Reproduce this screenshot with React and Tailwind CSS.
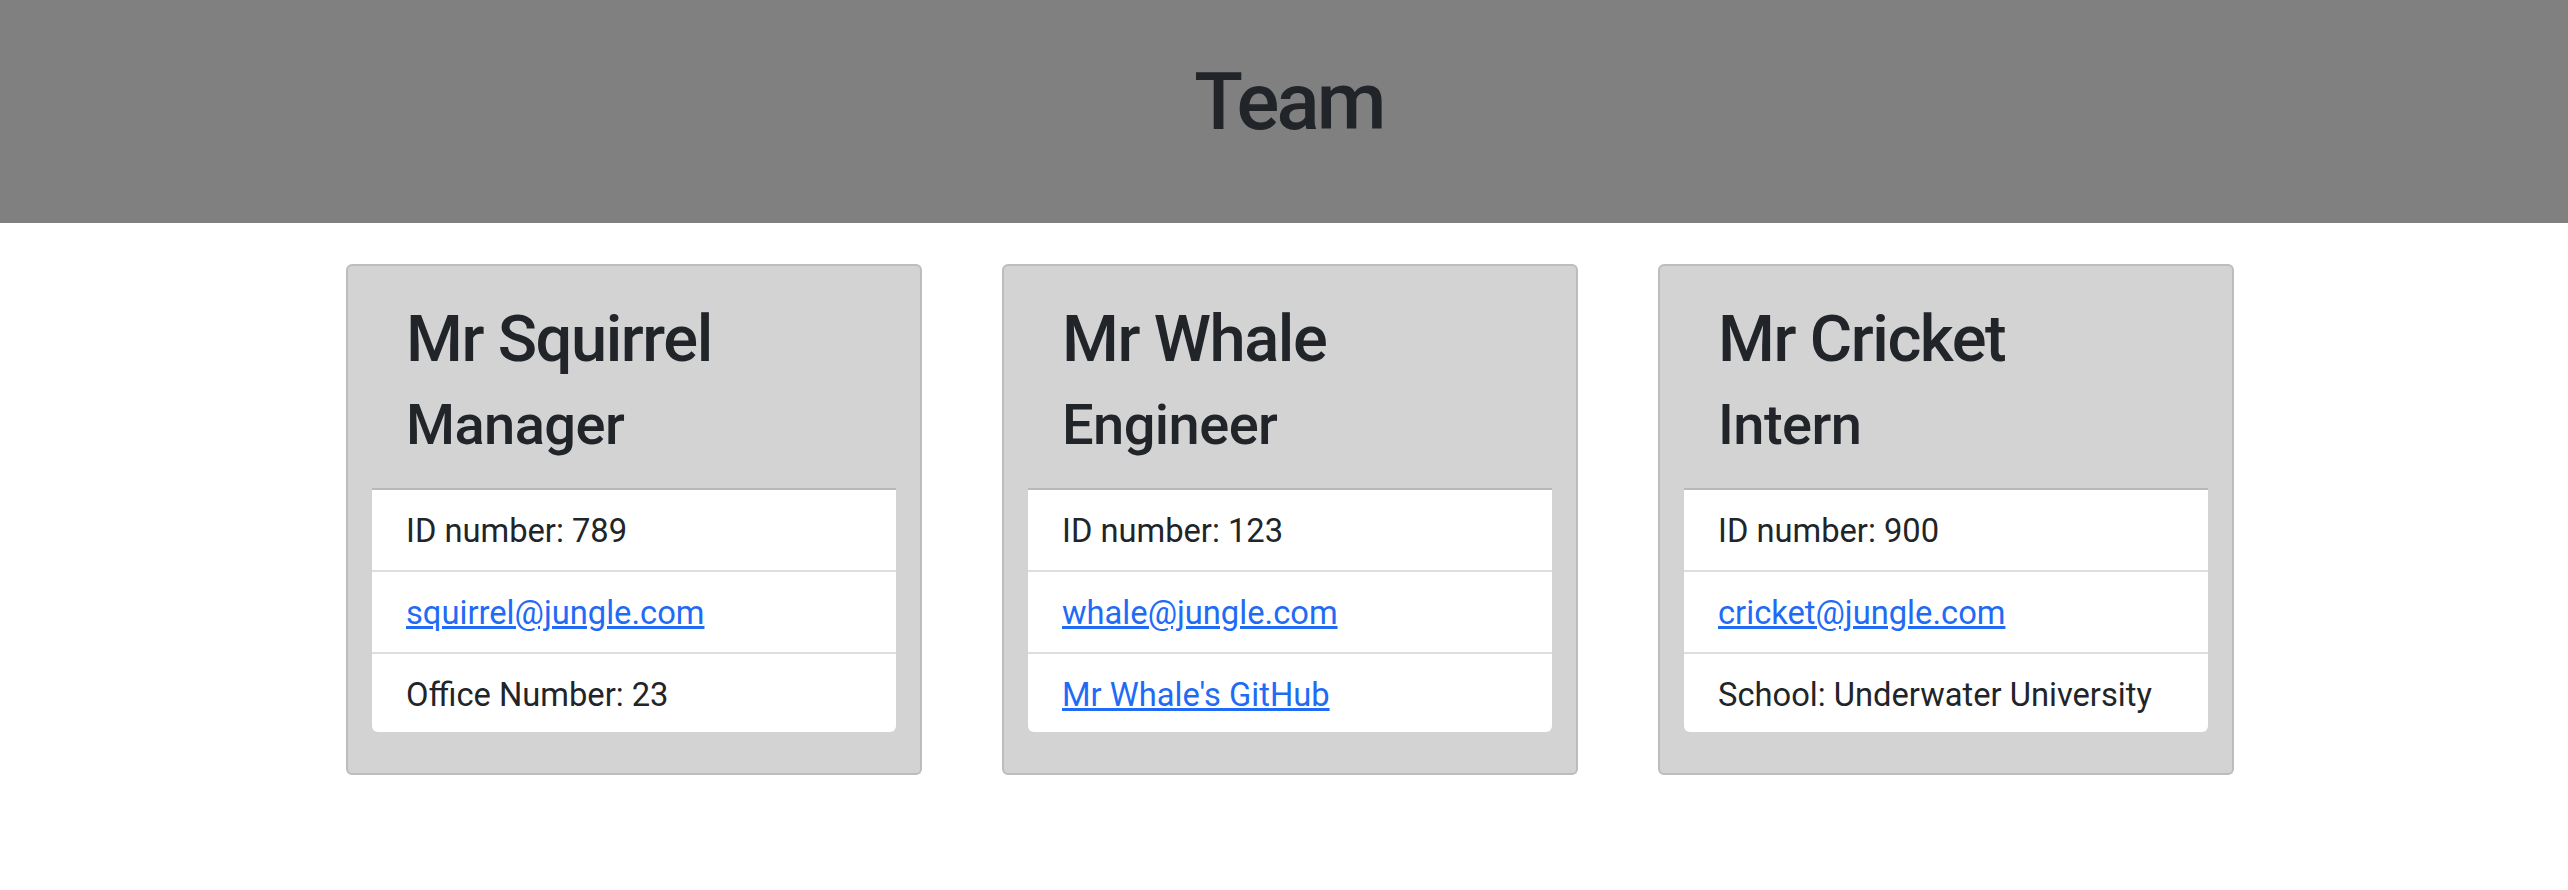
import React from "react";

const people = [
  { name: "Mr Squirrel", role: "Manager", id: "789", email: "squirrel@jungle.com", extra: { text: "Office Number: 23" } },
  { name: "Mr Whale", role: "Engineer", id: "123", email: "whale@jungle.com", extra: { text: "Mr Whale's GitHub", link: true } },
  { name: "Mr Cricket", role: "Intern", id: "900", email: "cricket@jungle.com", extra: { text: "School: Underwater University" } },
];

function Card({ p }) {
  return (
    <div className="w-[576px] h-[511px] bg-[#d3d3d3] border-2 border-[#bdbdbd] rounded-[6px] px-[24px] pt-[35px] flex flex-col">
      <div className="pl-[34px] text-[#212529]">
        <h2 className="text-[65px] leading-[76px] font-medium tracking-[-0.022em]">{p.name}</h2>
        <h3 className="text-[56px] leading-[66px] font-medium mt-[15px] tracking-[-0.01em]">{p.role}</h3>
      </div>
      <ul className="mt-[30px] bg-white rounded-b-[6px] border-t-2 border-[#b8b8b8] text-[32.7px] leading-[49px] text-[#212529]">
        <li className="px-[34px] pt-[17px] pb-[14px] border-b-2 border-[#dedede]">ID number: {p.id}</li>
        <li className="px-[34px] pt-[17px] pb-[14px] border-b-2 border-[#dedede]">
          <a href="#" className="text-[#1f6bf5] underline">{p.email}</a>
        </li>
        <li className="px-[34px] pt-[17px] pb-[12px]">
          {p.extra.link ? (
            <a href="#" className="text-[#1f6bf5] underline">{p.extra.text}</a>
          ) : (
            p.extra.text
          )}
        </li>
      </ul>
    </div>
  );
}

export default function App() {
  return (
    <div className="min-h-[890px] bg-white" style={{ fontFamily: "Roboto, 'Noto Sans', sans-serif" }}>
      <header className="h-[223px] bg-[#808080] flex justify-center">
        <h1 className="mt-[55px] ml-[10px] text-[80px] leading-[94px] font-medium text-[#212529] tracking-[-0.035em]">Team</h1>
      </header>
      <main className="flex gap-[80px] pl-[346px] pt-[41px]">
        {people.map((p) => (
          <Card key={p.name} p={p} />
        ))}
      </main>
    </div>
  );
}
